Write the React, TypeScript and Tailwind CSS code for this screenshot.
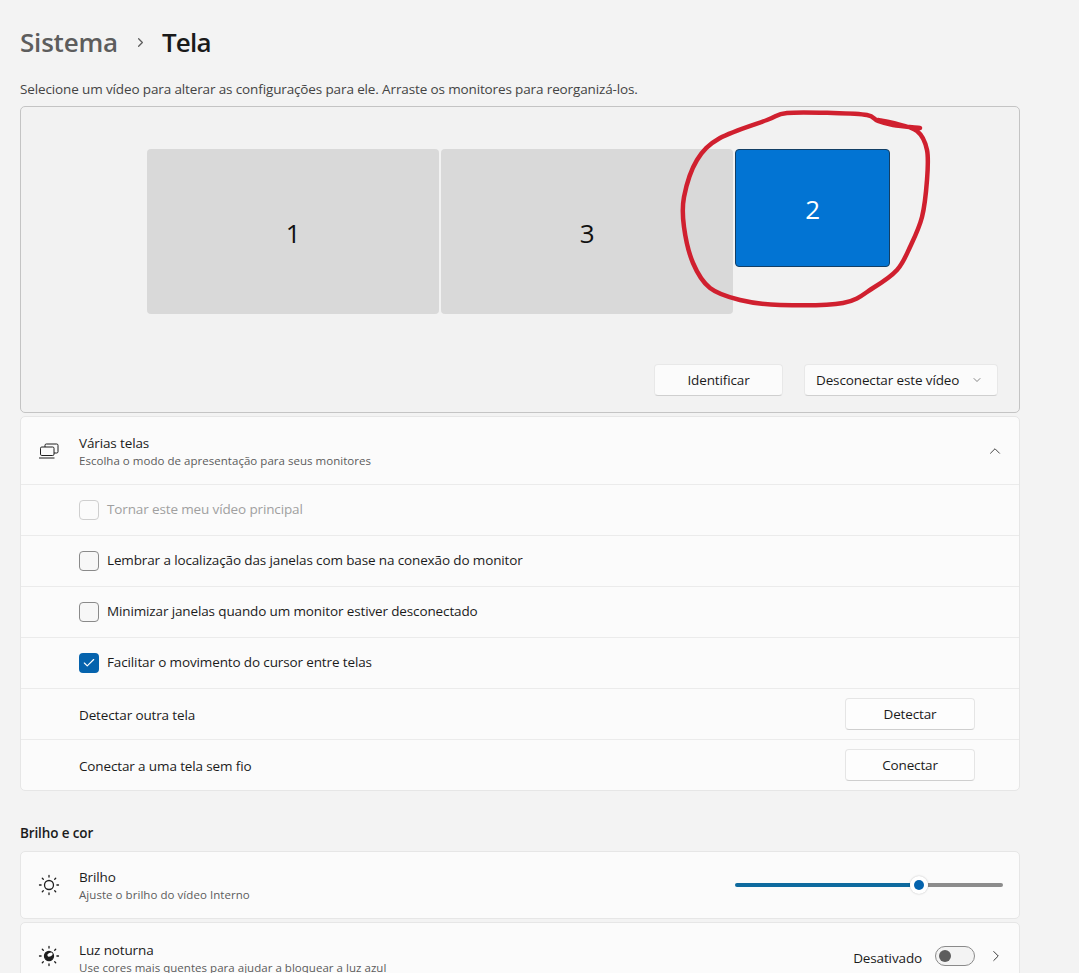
import { Check, ChevronDown, ChevronRight, ChevronUp } from 'lucide-react';

const redLine: [number, number][] = [
  [920, 128], [893, 125], [878, 121], [867, 115], [833, 113], [787, 113], [767, 120], [720, 138], [697, 160], [684, 197],
  [684, 227], [693, 263], [710, 288], [740, 300], [780, 305], [843, 303], [873, 288], [897, 270], [910, 247],
  [922, 217], [927, 180], [927, 150], [917, 131], [893, 123], [878, 120],
];

// smooth line through the marker points
const redPath = () => {
  let d = `M${redLine[0][0]} ${redLine[0][1]}`;
  for (let i = 0; i < redLine.length - 1; i++) {
    const p0 = redLine[Math.max(i - 1, 0)];
    const p1 = redLine[i];
    const p2 = redLine[i + 1];
    const p3 = redLine[Math.min(i + 2, redLine.length - 1)];
    d += ` C${p1[0] + (p2[0] - p0[0]) / 6} ${p1[1] + (p2[1] - p0[1]) / 6} ${p2[0] - (p3[0] - p1[0]) / 6} ${p2[1] - (p3[1] - p1[1]) / 6} ${p2[0]} ${p2[1]}`;
  }
  return d;
};

const SunIcon = ({ night = false }: { night?: boolean }) => (
  <svg width="22" height="22" viewBox="0 0 22 22" fill="none" stroke="#1f1f1f" strokeWidth="1.3" strokeLinecap="round">
    <circle cx="11" cy="11" r="4.5" fill={night ? '#1f1f1f' : 'none'} />
    {night && <ellipse cx="12" cy="9.6" rx="2.8" ry="1.8" transform="rotate(-25 12 9.6)" fill="#ffffff" stroke="none" />}
    <path d="M11 1.5v1.6M11 18.9v1.6M1.5 11h1.6M18.9 11h1.6M4.3 4.3l1 1M16.7 16.7l1 1M17.7 4.3l-1 1M5.3 16.7l-1 1" />
  </svg>
);

const ScreensIcon = () => (
  <svg width="22" height="22" viewBox="0 0 22 22" fill="none" stroke="#1f1f1f" strokeWidth="1">
    <path d="M7 7V5.3A1.3 1.3 0 0 1 8.3 4h10.4A1.3 1.3 0 0 1 20 5.3v6.4A1.3 1.3 0 0 1 18.7 13H16" />
    <rect x="2.5" y="7" width="13.5" height="8.5" rx="1.3" />
    <path d="M1 18h15.5" />
  </svg>
);

const CheckRow = ({ label, checked = false, disabled = false }: { label: string; checked?: boolean; disabled?: boolean }) => (
  <div className="flex h-[51px] items-center border-t border-[#ebebeb] pl-[58px]">
    {checked ? (
      <span className="flex h-5 w-5 items-center justify-center rounded-[4px] bg-[#0563ad]">
        <Check size={14} strokeWidth={2} className="text-white" />
      </span>
    ) : (
      <span className={`h-5 w-5 rounded-[4px] border ${disabled ? 'border-[#cfcfcf] bg-[#fbfbfb]' : 'border-[#8a8a8a] bg-[#f7f7f7]'}`} />
    )}
    <span className={`mb-[2px] ml-2 ${disabled ? 'text-[#a0a0a0]' : 'text-[#1b1b1b]'}`}>{label}</span>
  </div>
);

const ButtonRow = ({ label, button }: { label: string; button: string }) => (
  <div className="flex h-[51px] items-center justify-between border-t border-[#ebebeb] pl-[58px] pr-[44px]">
    <span className="mt-[3px] text-[#1b1b1b]">{label}</span>
    <button className="h-8 w-[130px] rounded-[4px] border border-[#e5e5e5] border-b-[#cfcfcf] bg-[#fdfdfd] text-[#1b1b1b]">
      {button}
    </button>
  </div>
);

export default function App() {
  return (
    <div
      className="relative h-[973px] overflow-hidden bg-[#f3f3f3] pl-5 text-[13.5px] tracking-[-0.13px] text-[#1b1b1b]"
      style={{ fontFamily: '"Open Sans", "Noto Sans", sans-serif' }}
    >
      <div className="flex h-[79px] items-center pt-[5px] text-[26px] font-semibold tracking-[-0.2px]">
        <span className="text-[#5d5d5d]">Sistema</span>
        <ChevronRight size={15} strokeWidth={2} className="ml-[15px] mr-[14px] text-[#5d5d5d]" />
        <span className="tracking-[-0.8px] text-[#1a1a1a]">Tela</span>
      </div>
      <p className="h-[27px] text-[#444444]">
        Selecione um vídeo para alterar as configurações para ele. Arraste os monitores para reorganizá-los.
      </p>

      <div className="h-[307px] w-[1000px] rounded-[5px] border border-[#c4c4c4] bg-[#f2f2f2]">
        <div className="flex items-start gap-[2px] pl-[126px] pt-[42px]">
          <div className="flex h-[165px] w-[292px] items-center justify-center rounded-[4px] bg-[#d9d9d9] pt-[4px] text-[26px] text-[#111111]">1</div>
          <div className="flex h-[165px] w-[292px] items-center justify-center rounded-[4px] bg-[#d9d9d9] pt-[4px] text-[26px] text-[#111111]">3</div>
          <div className="flex h-[118px] w-[155px] items-center justify-center rounded-[4px] border border-[#123f66] bg-[#0274d3] pt-[3px] text-[26px] text-white">2</div>
        </div>
        <div className="mt-[50px] flex justify-end gap-[21px] pr-[21px]">
          <button className="h-8 w-[129px] rounded-[4px] border border-[#e8e8e8] border-b-[#cfcfcf] bg-[#fbfbfb]">Identificar</button>
          <button className="flex h-8 w-[194px] items-center justify-between rounded-[4px] border border-[#e8e8e8] border-b-[#cfcfcf] bg-[#fbfbfb] pl-[11px] pr-[14px]">
            Desconectar este vídeo
            <ChevronDown size={12} strokeWidth={1.4} className="text-[#555555]" />
          </button>
        </div>
      </div>

      <div className="mt-[3px] w-[1000px] rounded-[5px] border border-[#e6e6e6] bg-[#fbfbfb]">
        <div className="flex h-[67px] items-center pl-[17px] pr-[15px]">
          <ScreensIcon />
          <div className="ml-[19px] flex-1 pt-[3px]">
            <div className="leading-[18px] text-[#1b1b1b]">Várias telas</div>
            <div className="text-[11.5px] tracking-[0.03px] text-[#5c5c5c]">Escolha o modo de apresentação para seus monitores</div>
          </div>
          <ChevronUp size={18} strokeWidth={1.2} className="text-[#333333]" />
        </div>
        <CheckRow label="Tornar este meu vídeo principal" disabled />
        <CheckRow label="Lembrar a localização das janelas com base na conexão do monitor" />
        <CheckRow label="Minimizar janelas quando um monitor estiver desconectado" />
        <CheckRow label="Facilitar o movimento do cursor entre telas" checked />
        <ButtonRow label="Detectar outra tela" button="Detectar" />
        <ButtonRow label="Conectar a uma tela sem fio" button="Conectar" />
      </div>

      <h2 className="mt-[32px] h-[28px] font-semibold text-[#1b1b1b]">Brilho e cor</h2>

      <div className="flex h-[68px] w-[1000px] items-center rounded-[5px] border border-[#e6e6e6] bg-[#fbfbfb] pl-[17px] pr-[16px]">
        <SunIcon />
        <div className="ml-[19px] flex-1 pt-[2px]">
          <div className="leading-[18px]">Brilho</div>
          <div className="text-[11.5px] tracking-[0.05px] text-[#5c5c5c]">Ajuste o brilho do vídeo Interno</div>
        </div>
        <div className="flex w-[268px] items-center">
          <div className="h-[4px] w-[175px] rounded-l-full bg-[#0e6a9e]" />
          <div className="z-10 flex h-[18px] w-[18px] shrink-0 items-center justify-center rounded-full bg-white shadow-[0_0_2px_rgba(0,0,0,0.25)]">
            <div className="h-[10px] w-[10px] rounded-full bg-[#0563ad]" />
          </div>
          <div className="h-[4px] flex-1 rounded-r-full bg-[#8c8c8c]" />
        </div>
      </div>

      <div className="mt-[3px] flex h-[68px] w-[1000px] items-center rounded-[5px] border border-[#e6e6e6] bg-[#fbfbfb] pl-[17px] pr-[14px]">
        <SunIcon night />
        <div className="ml-[19px] flex-1 pt-[5px]">
          <div className="leading-[18px]">Luz noturna</div>
          <div className="text-[11.5px] tracking-[0.03px] text-[#5c5c5c]">Use cores mais quentes para ajudar a bloquear a luz azul</div>
        </div>
        <span className="mr-[13px] mt-[4px]">Desativado</span>
        <div className="flex h-5 w-10 items-center rounded-full border border-[#8a8a8a] bg-[#f3f3f3] pl-[3px]">
          <div className="h-3 w-3 rounded-full bg-[#5d5d5d]" />
        </div>
        <ChevronRight size={18} strokeWidth={1.3} className="ml-[12px] text-[#333333]" />
      </div>

      <svg className="pointer-events-none absolute left-0 top-0" width="1079" height="973" fill="none">
        <path d={redPath()} stroke="#d0202f" strokeWidth="4.5" strokeLinecap="round" strokeLinejoin="round" />
      </svg>
    </div>
  );
}
